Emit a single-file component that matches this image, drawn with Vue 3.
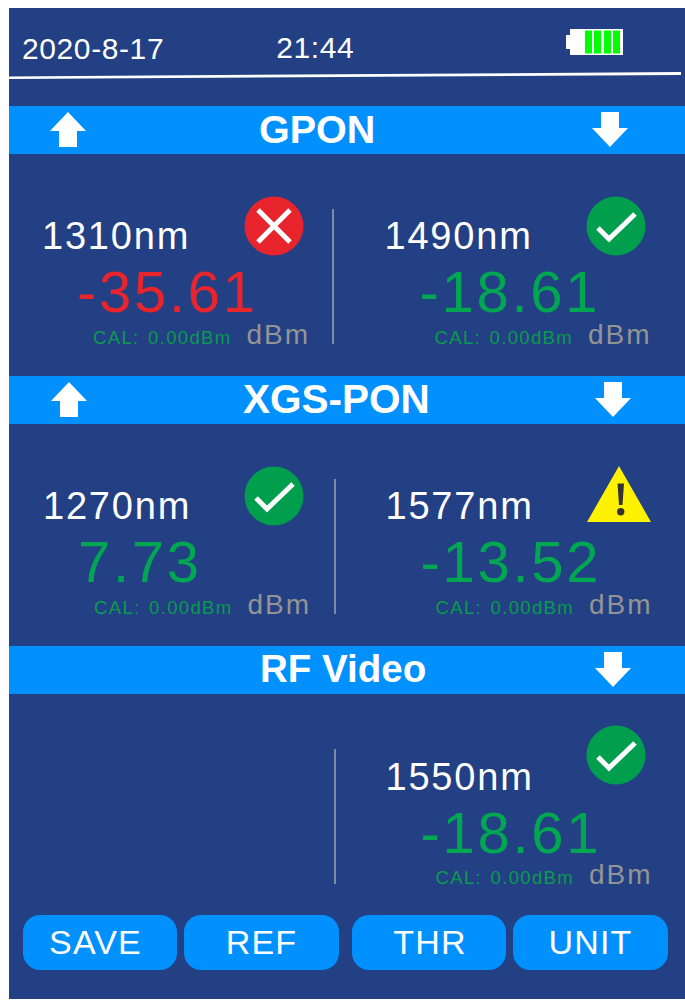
<script setup>
const sections = [
  { title: 'GPON', key: 'gpon', up: true, cells: [
    { nm: '1310nm', value: '-35.61', tone: 'red', icon: 'cross' },
    { nm: '1490nm', value: '-18.61', tone: 'green', icon: 'check' },
  ] },
  { title: 'XGS-PON', key: 'xgs', up: true, cells: [
    { nm: '1270nm', value: '7.73', tone: 'green', icon: 'check' },
    { nm: '1577nm', value: '-13.52', tone: 'green', icon: 'warn' },
  ] },
  { title: 'RF Video', key: 'rf', up: false, cells: [
    null,
    { nm: '1550nm', value: '-18.61', tone: 'green', icon: 'check' },
  ] },
]
const buttons = ['SAVE', 'REF', 'THR', 'UNIT']
</script>

<template>
  <div class="screen">
    <header class="status">
      <span class="date">2020-8-17</span>
      <span class="time">21:44</span>
      <svg class="battery" width="57" height="26" viewBox="0 0 57 26">
        <path d="M4 0H57V26H4V20H0V6H4Z" fill="#fff" />
        <rect x="19" y="1.500" width="7" height="23" fill="#00ff00" />
        <rect x="28" y="1.500" width="7" height="23" fill="#00ff00" />
        <rect x="38" y="1.500" width="7" height="23" fill="#00ff00" />
        <rect x="47" y="1.500" width="7" height="23" fill="#00ff00" />
      </svg>
    </header>
    <svg class="rule" width="676" height="8" viewBox="0 0 676 8">
      <polygon points="0,5.500 672,1 672,4 0,8" fill="#fff" />
    </svg>

    <section v-for="s in sections" :key="s.key" class="section" :class="s.key">
      <div class="band">
        <svg v-if="s.up" class="arrow up" width="36" height="35" viewBox="0 0 36 35">
          <polygon points="18,0 36,19 27,19 27,35 9,35 9,19 0,19" fill="#fff" />
        </svg>
        <span class="title">{{ s.title }}</span>
        <svg class="arrow down" width="36" height="35" viewBox="0 0 36 35">
          <polygon points="18,35 36,16 27,16 27,0 9,0 9,16 0,16" fill="#fff" />
        </svg>
      </div>
      <div class="body">
        <div class="cell left">
          <template v-if="s.cells[0]">
            <div class="head">
              <span class="nm">{{ s.cells[0].nm }}</span>
              <svg v-if="s.cells[0].icon === 'cross'" class="icon" width="60" height="60" viewBox="0 0 60 60">
                <circle cx="30" cy="30" r="29.500" fill="#e8242c" />
                <path d="M14 14L46 46M46 14L14 46" stroke="#fff" stroke-width="5" fill="none" />
              </svg>
              <svg v-else class="icon" width="60" height="60" viewBox="0 0 60 60">
                <circle cx="30" cy="30" r="29.500" fill="#009e4d" />
                <path d="M12 32L23 43L49 18" stroke="#fff" stroke-width="5" fill="none" />
              </svg>
            </div>
            <div class="value" :class="s.cells[0].tone">{{ s.cells[0].value }}</div>
            <div class="foot"><span class="cal">CAL: 0.00dBm</span><span class="unit">dBm</span></div>
          </template>
        </div>
        <div class="divider"></div>
        <div class="cell right">
          <div class="head">
            <span class="nm">{{ s.cells[1].nm }}</span>
            <svg v-if="s.cells[1].icon === 'warn'" class="icon warn" width="64" height="56" viewBox="0 0 64 56">
              <polygon points="32,0 64,56 0,56" fill="#fff200" />
              <path d="M30.500 17.500H37L35.500 39H32Z" fill="#333" />
              <circle cx="33.700" cy="45.700" r="3.700" fill="#333" />
            </svg>
            <svg v-else class="icon" width="60" height="60" viewBox="0 0 60 60">
              <circle cx="30" cy="30" r="29.500" fill="#009e4d" />
              <path d="M12 32L23 43L49 18" stroke="#fff" stroke-width="5" fill="none" />
            </svg>
          </div>
          <div class="value" :class="s.cells[1].tone">{{ s.cells[1].value }}</div>
          <div class="foot"><span class="cal">CAL: 0.00dBm</span><span class="unit">dBm</span></div>
        </div>
      </div>
    </section>

    <footer class="actions">
      <button v-for="b in buttons" :key="b" class="btn" type="button">{{ b }}</button>
    </footer>
  </div>
</template>

<style>
html, body { margin: 0; background: #fff; }
</style>

<style scoped>
.screen {
  box-sizing: border-box;
  width: 676px;
  height: 991px;
  margin: 8px 0 0 9px;
  background: #224083;
  color: #fff;
  font-family: "Liberation Sans", Arial, sans-serif;
  overflow: hidden;
}
.status {
  height: 63px;
  display: flex;
  align-items: flex-start;
  padding-left: 13px;
}
.date, .time {
  font-size: 30px;
  line-height: 34px;
  margin-top: 24px;
  letter-spacing: 0.600px;
}
.time { margin-left: 112px; margin-top: 23px; }
.battery { margin-left: 211.500px; margin-top: 21px; }
.rule { display: block; margin-bottom: 27px; }

.section { height: 270px; }
.band {
  height: 48px;
  background: #0091ff;
  display: flex;
  align-items: center;
}
.title {
  font-size: 39.500px;
  font-weight: 700;
  line-height: 46px;
  margin-bottom: 2px;
}
.arrow { flex: none; margin-top: -1px; }
.gpon .up { margin-left: 41px; }
.gpon .title { margin-left: 173px; }
.gpon .down { margin-left: 217px; }
.xgs .up { margin-left: 42px; }
.xgs .title { margin-left: 156px; font-size: 40.500px; }
.xgs .down { margin-left: 165px; }
.rf .title { margin-left: 251px; font-size: 38.500px; }
.rf .down { margin-left: 169px; }

.body { display: flex; height: 222px; }
.cell { flex: none; box-sizing: border-box; padding-top: 42px; }
.left { width: 323px; padding-left: 33px; }
.right { padding-left: 51px; width: 350px; }
.xgs .left, .rf .left { width: 324px; padding-left: 34px; }
.xgs .divider, .rf .divider { margin-left: 1px; }
.xgs .right, .rf .right { padding-left: 50px; }

.divider {
  flex: none;
  width: 1.500px;
  height: 135px;
  margin-top: 55px;
  background: #7f8aa6;
}
.head {
  width: 261px;
  height: 61px;
  display: flex;
  justify-content: space-between;
  align-items: flex-start;
}
.right .head { width: 260px; }
.xgs .left .head { width: 260px; }
.xgs .right .head { width: 261px; }
.rf .right .head { width: 259px; }
.nm {
  font-size: 38px;
  line-height: 44px;
  letter-spacing: 1.800px;
  margin-top: 18px;
  white-space: nowrap;
}
.icon { flex: none; margin-right: -1px; }
.warn { margin-right: -4px; }
.rf .icon { margin-top: -11px; }
.rf .nm { margin-top: 19px; }

.value {
  font-size: 58px;
  line-height: 62px;
  height: 57px;
  padding-left: 35px;
  margin-top: 4px;
  letter-spacing: 2.700px;
  white-space: nowrap;
}
.rf .value { margin-top: 5px; height: 56px; }
.red { color: #e8242c; }
.green { color: #00a651; }
.foot {
  display: flex;
  align-items: flex-start;
  padding-left: 51px;
  height: 34px;
  white-space: nowrap;
}
.right .foot { padding-left: 50px; }
.cal {
  font-size: 18.500px;
  line-height: 34px;
  margin-top: 3px;
  letter-spacing: 1.350px;
  word-spacing: 2px;
  color: #0a9a50;
}
.unit {
  font-size: 28px;
  line-height: 34px;
  letter-spacing: 2px;
  color: #949494;
  margin-left: 15px;
}

.actions {
  display: flex;
  margin-top: -1px;
  padding-left: 14px;
  gap: 7px;
}
.btn {
  flex: none;
  width: 154px;
  height: 55px;
  padding: 0;
  border: none;
  border-radius: 17px;
  background: #0091ff;
  color: #fff;
  font-family: inherit;
  font-size: 34px;
  line-height: 55px;
  letter-spacing: 1.200px;
}
.btn:nth-child(1) { padding-right: 9px; }
.btn:nth-child(2), .btn:nth-child(4) { width: 155px; }
.btn:nth-child(3) { margin-left: 6px; padding-left: 2px; }
</style>
